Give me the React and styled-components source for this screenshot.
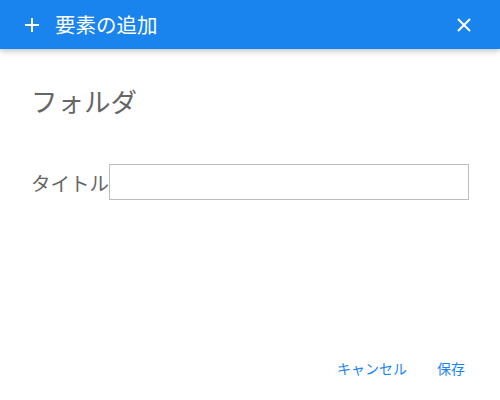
import React from "react";
import styled, { createGlobalStyle } from "styled-components";

const GlobalStyle = createGlobalStyle`
  html, body {
    margin: 0;
    padding: 0;
    background: #fff;
    font-family: "Noto Sans CJK JP", "Noto Sans", sans-serif;
  }
`;

export default function App() {
  return (
    <Dialog>
      <GlobalStyle />
      <Header>
        <HeaderTitle>
          <IconButton aria-label="add">
            <svg width="14" height="14" viewBox="0 0 14 14">
              <path d="M7 0v14M0 7h14" stroke="#fff" strokeWidth="2" />
            </svg>
          </IconButton>
          <Title>要素の追加</Title>
        </HeaderTitle>
        <IconButton aria-label="close">
          <svg width="14" height="14" viewBox="0 0 14 14">
            <path d="M1 1l12 12M13 1L1 13" stroke="#fff" strokeWidth="2" />
          </svg>
        </IconButton>
      </Header>
      <Body>
        <Heading>フォルダ</Heading>
        <Field>
          <Label htmlFor="title">タイトル</Label>
          <Input id="title" type="text" />
        </Field>
      </Body>
      <Footer>
        <TextButton>キャンセル</TextButton>
        <TextButton>保存</TextButton>
      </Footer>
    </Dialog>
  );
}

const Dialog = styled.div`
  width: 500px;
  height: 400px;
  display: flex;
  flex-direction: column;
  background: #fff;
`;

const Header = styled.header`
  height: 49px;
  flex-shrink: 0;
  background: #1a84ee;
  display: flex;
  align-items: center;
  justify-content: space-between;
  padding: 0 29px 0 25px;
  box-shadow: 0 2px 6px rgba(0, 0, 0, 0.25);
  position: relative;
  z-index: 1;
`;

const HeaderTitle = styled.div`
  display: flex;
  align-items: center;
  gap: 16px;
`;

const IconButton = styled.span`
  display: flex;
  align-items: center;
  justify-content: center;
  width: 14px;
  height: 14px;
`;

const Title = styled.h1`
  margin: 0;
  color: #fff;
  font-size: 20.5px;
  font-weight: 400;
  line-height: 1;
`;

const Body = styled.div`
  flex: 1;
  padding: 30px 30px 0 31px;
`;

const Heading = styled.h2`
  margin: 0;
  font-size: 26.5px;
  font-weight: 400;
  color: #666;
  line-height: 44px;
`;

const Field = styled.div`
  display: flex;
  align-items: center;
  margin-top: 41px;
`;

const Label = styled.label`
  font-size: 19.5px;
  color: #666;
  white-space: nowrap;
`;

const Input = styled.input`
  box-sizing: border-box;
  width: 360px;
  height: 36px;
  margin: 0;
  border: 1px solid #bdbdbd;
  border-radius: 0;
  padding: 0 8px;
  font-size: 16px;
  outline: none;
`;

const Footer = styled.footer`
  display: flex;
  justify-content: flex-end;
  gap: 30px;
  padding: 0 35px 22px 0;
`;

const TextButton = styled.button`
  background: none;
  border: none;
  padding: 0;
  font-family: inherit;
  font-size: 14px;
  color: #1a84ee;
  cursor: pointer;
`;
